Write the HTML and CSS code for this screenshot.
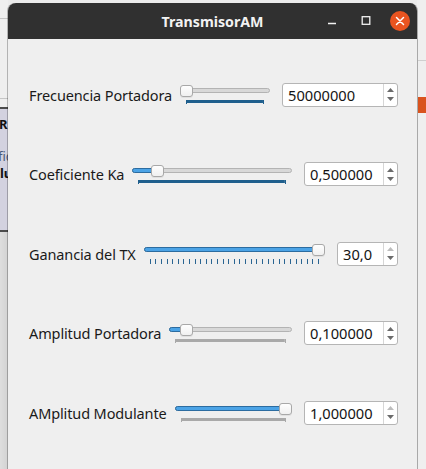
FILE: index.html
```html
<!DOCTYPE html>
<html>
<head>
<meta charset="utf-8">
<title>TransmisorAM</title>
<link rel="stylesheet" href="styles.css">
</head>
<body>
<div class="desktop">
  <div class="bg-left">
    <div class="bl-line l1"></div>
    <div class="bl-line l2"></div>
    <div class="bl-panel">
      <span class="frag frag-r">R</span>
      <span class="frag frag-fi">fic</span>
      <span class="frag frag-lu">lu</span>
    </div>
    <div class="bl-bottom"></div>
  </div>
  <div class="bg-right">
    <div class="br-line"></div>
    <div class="br-orange"></div>
  </div>

  <div class="window">
    <div class="titlebar">
      <span class="title">TransmisorAM</span>
      <div class="controls">
        <span class="wbtn">
          <svg width="20" height="20" viewBox="0 0 20 20"><line x1="6" y1="12.5" x2="14" y2="12.5" stroke="#f2f2f2" stroke-width="1.5"/></svg>
        </span>
        <span class="wbtn">
          <svg width="20" height="20" viewBox="0 0 20 20"><rect x="6.2" y="5.7" width="7.6" height="7.6" fill="none" stroke="#f2f2f2" stroke-width="1.3"/></svg>
        </span>
        <span class="wbtn">
          <svg width="20" height="20" viewBox="0 0 20 20"><circle cx="10" cy="10" r="10" fill="#e95420"/><path d="M6.5 6.5 L13.5 13.5 M13.5 6.5 L6.5 13.5" stroke="#ffffff" stroke-width="1.5" stroke-linecap="round"/></svg>
        </span>
      </div>
    </div>

    <div class="content">
      <div class="row">
        <span class="label">Frecuencia Portadora</span>
        <div class="slider">
          <div class="track" style="--p:0">
            <div class="groove"></div>
            <div class="fill"></div>
            <div class="handle"></div>
          </div>
          <div class="ticks-solid blue"></div>
        </div>
        <div class="spin w-long">
          <span class="val">50000000</span>
          <div class="btns">
            <svg class="arrow" width="7" height="4" viewBox="0 0 7 4"><polygon points="0,4 3.5,0 7,4"/></svg>
            <svg class="arrow" width="7" height="4" viewBox="0 0 7 4"><polygon points="0,0 7,0 3.5,4"/></svg>
          </div>
        </div>
      </div>

      <div class="row">
        <span class="label">Coeficiente Ka</span>
        <div class="slider">
          <div class="track" style="--p:0.13">
            <div class="groove"></div>
            <div class="fill"></div>
            <div class="handle"></div>
          </div>
          <div class="ticks-solid blue"></div>
        </div>
        <div class="spin w-mid">
          <span class="val">0,500000</span>
          <div class="btns">
            <svg class="arrow" width="7" height="4" viewBox="0 0 7 4"><polygon points="0,4 3.5,0 7,4"/></svg>
            <svg class="arrow" width="7" height="4" viewBox="0 0 7 4"><polygon points="0,0 7,0 3.5,4"/></svg>
          </div>
        </div>
      </div>

      <div class="row">
        <span class="label">Ganancia del TX</span>
        <div class="slider">
          <div class="track" style="--p:1">
            <div class="groove"></div>
            <div class="fill"></div>
            <div class="handle"></div>
          </div>
          <div class="ticks-sep">
            <i></i><i></i><i></i><i></i><i></i><i></i><i></i><i></i><i></i><i></i>
            <i></i><i></i><i></i><i></i><i></i><i></i><i></i><i></i><i></i><i></i>
            <i></i><i></i><i></i><i></i><i></i><i></i><i></i><i></i><i></i><i></i>
            <i></i>
          </div>
        </div>
        <div class="spin w-short">
          <span class="val">30,0</span>
          <div class="btns">
            <svg class="arrow off" width="7" height="4" viewBox="0 0 7 4"><polygon points="0,4 3.5,0 7,4"/></svg>
            <svg class="arrow" width="7" height="4" viewBox="0 0 7 4"><polygon points="0,0 7,0 3.5,4"/></svg>
          </div>
        </div>
      </div>

      <div class="row">
        <span class="label">Amplitud Portadora</span>
        <div class="slider">
          <div class="track" style="--p:0.1">
            <div class="groove"></div>
            <div class="fill"></div>
            <div class="handle"></div>
          </div>
          <div class="ticks-solid gray"></div>
        </div>
        <div class="spin w-mid">
          <span class="val">0,100000</span>
          <div class="btns">
            <svg class="arrow" width="7" height="4" viewBox="0 0 7 4"><polygon points="0,4 3.5,0 7,4"/></svg>
            <svg class="arrow" width="7" height="4" viewBox="0 0 7 4"><polygon points="0,0 7,0 3.5,4"/></svg>
          </div>
        </div>
      </div>

      <div class="row">
        <span class="label">AMplitud Modulante</span>
        <div class="slider">
          <div class="track" style="--p:1">
            <div class="groove"></div>
            <div class="fill"></div>
            <div class="handle"></div>
          </div>
          <div class="ticks-solid gray"></div>
        </div>
        <div class="spin w-mid">
          <span class="val">1,000000</span>
          <div class="btns">
            <svg class="arrow off" width="7" height="4" viewBox="0 0 7 4"><polygon points="0,4 3.5,0 7,4"/></svg>
            <svg class="arrow" width="7" height="4" viewBox="0 0 7 4"><polygon points="0,0 7,0 3.5,4"/></svg>
          </div>
        </div>
      </div>
    </div>
  </div>
</div>
</body>
</html>
```

FILE: styles.css
```css
* { box-sizing: border-box; }
html, body { margin: 0; padding: 0; }
body {
  font-family: "Noto Sans", "DejaVu Sans", sans-serif;
  background: #ebebeb;
}

.desktop {
  position: relative;
  width: 426px;
  height: 469px;
  overflow: hidden;
  background: #ebebeb;
}

/* background windows peeking out on the left */
.bg-left {
  position: absolute;
  left: 0; top: 0;
  width: 8px; height: 469px;
  overflow: hidden;
  background: #efefef;
}
.bl-line { position: absolute; left: 0; right: 0; height: 1px; background: #c6c6c6; }
.bl-line.l1 { top: 18px; }
.bl-line.l2 { top: 98px; }
.bl-panel {
  position: absolute;
  left: 0; right: 0;
  top: 107px; height: 125px;
  background: #d3d2e0;
  border-top: 2px solid #4c4c4c;
  border-bottom: 2px solid #4c4c4c;
}
.frag { position: absolute; font-size: 13px; line-height: 1; white-space: nowrap; color: #111; }
.frag-r { left: -1px; top: 9px; font-weight: bold; }
.frag-fi { left: -2px; top: 41px; color: #4a5a78; }
.frag-lu { left: 0; top: 58px; font-weight: bold; }
.bl-bottom {
  position: absolute;
  left: 0; right: 0;
  top: 232px; bottom: 0;
  background: linear-gradient(90deg, #dedede, #d2d2d2);
}

.bg-right {
  position: absolute;
  right: 0; top: 0;
  width: 9px; height: 469px;
  background: #efefef;
}
.br-line { position: absolute; left: 0; right: 0; top: 60px; height: 1px; background: #cfcfcf; }
.br-orange { position: absolute; left: 0; right: 0; top: 97px; height: 16px; background: #d9531e; }

/* main window */
.window {
  position: absolute;
  left: 8px; top: 3px;
  width: 410px; height: 480px;
  background: #efefef;
  border-radius: 8px 8px 0 0;
  border-right: 1px solid #a9a9a9;
  box-shadow: -1px 0 0 rgba(0, 0, 0, 0.25);
  overflow: hidden;
}

.titlebar {
  height: 36px;
  background: #303030;
  display: grid;
  grid-template-columns: 1fr auto 1fr;
  align-items: center;
}
.title {
  grid-column: 2;
  color: #f2f2f2;
  font-weight: bold;
  font-size: 14.2px;
}
.controls {
  grid-column: 3;
  justify-self: end;
  display: flex;
  gap: 14px;
  padding-right: 7px;
}
.wbtn { display: block; width: 20px; height: 20px; }
.wbtn svg { display: block; }

.content {
  padding: 16px 19px 0 21px;
}

.row {
  height: 79.5px;
  display: flex;
  align-items: center;
}

.label {
  font-size: 14.5px;
  letter-spacing: -0.12px;
  color: #1a1a1a;
  white-space: nowrap;
  margin-right: 8px;
}

.slider {
  flex: 1;
  display: flex;
  flex-direction: column;
}
.track {
  position: relative;
  height: 12px;
}
.groove {
  position: absolute;
  left: 0; right: 0;
  top: 3px; height: 5px;
  background: #d8d8d8;
  border: 1px solid #b3b3b3;
  border-radius: 3px;
}
.fill {
  position: absolute;
  left: 0;
  top: 3px; height: 5px;
  width: calc((100% - 13px) * var(--p) + 7px);
  background: #4ba3e6;
  border: 1px solid #2c6ca0;
  border-radius: 3px;
}
.handle {
  position: absolute;
  top: 0;
  left: calc((100% - 13px) * var(--p));
  width: 13px; height: 12px;
  background: linear-gradient(#fefefe, #f0f0f0);
  border: 1px solid #a8a8a8;
  border-radius: 3px;
  box-shadow: 0 1px 0 rgba(0, 0, 0, 0.06);
}

.ticks-solid {
  margin: 3px 6px 0;
  height: 4px;
  border-left: 1px solid currentColor;
  border-right: 1px solid currentColor;
  background: linear-gradient(currentColor, currentColor) top / 100% 3px no-repeat;
}
.ticks-solid.blue { color: #1f5f8d; }
.ticks-solid.gray { color: #a9a9a9; }

.ticks-sep {
  margin: 3px 6px 0;
  height: 5px;
  display: flex;
  justify-content: space-between;
}
.ticks-sep i {
  display: block;
  width: 1px;
  height: 5px;
  background: #2a6592;
}

.spin {
  margin-left: 12px;
  height: 24px;
  display: flex;
  background: #ffffff;
  border: 1px solid #b5b5b5;
  border-radius: 3px;
}
.spin.w-long { width: 116px; }
.spin.w-mid { width: 94px; }
.spin.w-short { width: 61px; }
.spin .val {
  flex: 1;
  padding-left: 5px;
  font-size: 14.67px;
  line-height: 22px;
  color: #141414;
}
.spin .btns {
  width: 14px;
  border-left: 1px solid #d6d6d6;
  display: flex;
  flex-direction: column;
  align-items: center;
  justify-content: center;
  gap: 5px;
}
.arrow { display: block; fill: #6b6b6b; }
.arrow.off { fill: #bdbdbd; }
```
